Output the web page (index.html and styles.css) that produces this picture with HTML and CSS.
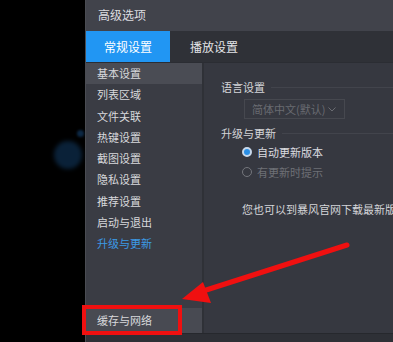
FILE: index.html
```html
<!DOCTYPE html>
<html lang="zh-CN">
<head>
    <meta charset="UTF-8">
    <meta name="viewport" content="width=device-width, initial-scale=1.0">
    <title>高级选项</title>
    <link rel="stylesheet" href="styles.css">
</head>
<body>
    <div class="glow glow-big"></div>
    <div class="glow glow-small"></div>

    <div class="window">
        <div class="titlebar">高级选项</div>

        <div class="tabs">
            <div class="tab active">常规设置</div>
            <div class="tab">播放设置</div>
        </div>

        <div class="main">
            <!-- Left menu -->
            <div class="sidebar">
                <div class="menu-item selected">基本设置</div>
                <div class="menu-item">列表区域</div>
                <div class="menu-item">文件关联</div>
                <div class="menu-item">热键设置</div>
                <div class="menu-item">截图设置</div>
                <div class="menu-item">隐私设置</div>
                <div class="menu-item">推荐设置</div>
                <div class="menu-item">启动与退出</div>
                <div class="menu-item current">升级与更新</div>
                <div class="menu-item last">缓存与网络</div>
            </div>

            <!-- Settings panel -->
            <div class="content">
                <div class="group">
                    <div class="group-title">语言设置</div>
                    <div class="select">
                        <span>简体中文(默认)</span>
                        <svg class="chevron" width="8" height="5" viewBox="0 0 8 5">
                            <path d="M0.5 0.5 L4 4 L7.5 0.5" fill="none" stroke="#6a6c72" stroke-width="1"></path>
                        </svg>
                    </div>
                </div>

                <div class="group">
                    <div class="group-title">升级与更新</div>
                    <label class="radio">
                        <span class="dot checked"></span>自动更新版本
                    </label>
                    <label class="radio disabled">
                        <span class="dot"></span>有更新时提示
                    </label>
                </div>

                <div class="hint">您也可以到暴风官网下载最新版本</div>
            </div>
        </div>

        <div class="statusbar"></div>
    </div>

    <!-- annotation -->
    <div class="mark-box"></div>
    <svg class="mark-arrow" width="393" height="342" viewBox="0 0 393 342">
        <line x1="347" y1="245" x2="200" y2="292" stroke="#f01010" stroke-width="5" stroke-linecap="round"></line>
        <polygon points="182,299 203,282 211,303" fill="#f01010"></polygon>
    </svg>
</body>
</html>
```

FILE: styles.css
```css
* {
    margin: 0;
    padding: 0;
    box-sizing: border-box;
    font-family: "Noto Sans CJK SC", "Noto Sans", sans-serif;
}

body {
    background-color: #000;
    width: 393px;
    height: 342px;
    overflow: hidden;
    position: relative;
}

.glow {
    position: absolute;
    border-radius: 50%;
    background-color: #0a2138;
    filter: blur(2px);
}

.glow-big {
    left: 54px;
    top: 141px;
    width: 28px;
    height: 28px;
}

.glow-small {
    left: 77px;
    top: 130px;
    width: 7px;
    height: 7px;
    background-color: #0c2844;
    filter: blur(1px);
}

.window {
    margin-left: 85px;
    width: 420px;
    height: 342px;
    display: flex;
    flex-direction: column;
    border-left: 1px solid #4a4c52;
    background-color: #363840;
}

.titlebar {
    height: 31px;
    line-height: 30px;
    padding-left: 12px;
    background-color: #41434b;
    color: #dcdde0;
    font-size: 12px;
}

.tabs {
    height: 31px;
    display: flex;
    background-color: #2f3137;
}

.tab {
    line-height: 31px;
    font-size: 12px;
    color: #e4e5e8;
    padding-left: 20px;
}

.tab.active {
    width: 84px;
    padding-left: 0;
    text-align: center;
    background-color: #2196f3;
    color: #fff;
}

.main {
    flex: 1;
    display: flex;
    border-top: 1px solid #2b2d33;
}

.sidebar {
    width: 118px;
    display: flex;
    flex-direction: column;
    background-color: #3a3c44;
    border-right: 2px solid #2f3137;
}

.menu-item {
    height: 21.3px;
    line-height: 21px;
    padding-left: 11px;
    font-size: 11px;
    color: #d8d9dc;
}

.menu-item.selected {
    background-color: #4a4c54;
}

.menu-item.current {
    color: #3c9ae6;
}

.menu-item.last {
    margin-top: auto;
    height: 25px;
    line-height: 25px;
    background-color: #484a52;
}

.content {
    flex: 1;
    padding: 16px 0 0 17px;
    background-color: #363840;
}

.group {
    margin-bottom: 6px;
}

.group-title {
    display: flex;
    align-items: center;
    font-size: 11px;
    color: #d4d5d8;
    height: 16px;
}

.group-title::after {
    content: "";
    flex: 1;
    height: 1px;
    margin-left: 6px;
    background-color: #42444c;
}

.select {
    margin: 4px 0 0 23px;
    width: 101px;
    height: 20px;
    border: 1px solid #46484f;
    display: flex;
    align-items: center;
    justify-content: space-between;
    padding: 0 8px 0 7px;
    font-size: 11px;
    color: #696b71;
}

.radio {
    display: flex;
    align-items: center;
    height: 20px;
    margin-left: 21px;
    font-size: 11px;
    color: #dcdde0;
}

.radio:first-of-type {
    margin-top: 1px;
}

.radio.disabled {
    color: #6e7076;
}

.dot {
    width: 10px;
    height: 10px;
    border-radius: 50%;
    border: 1px solid #74767c;
    margin-right: 5px;
}

.dot.checked {
    border: 2px solid #c8d8ea;
    background-color: #2a8fe6;
}

.hint {
    margin: 19px 0 0 21px;
    font-size: 11px;
    color: #d4d5d8;
    white-space: nowrap;
}

.statusbar {
    height: 9px;
    background-color: #2e3036;
    border-top: 1px solid #26282d;
}

.mark-box {
    position: absolute;
    left: 82px;
    top: 305px;
    width: 100px;
    height: 30px;
    border: 4px solid #f01010;
}

.mark-arrow {
    position: absolute;
    left: 0;
    top: 0;
}
```
